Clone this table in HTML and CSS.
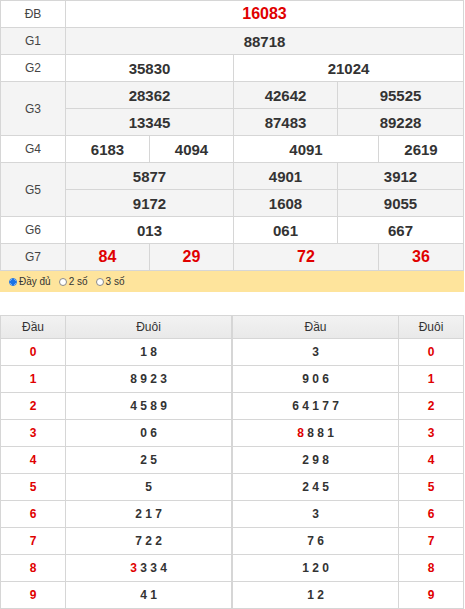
FILE: index.html
```html
<!DOCTYPE html>
<html lang="vi">
<head>
<meta charset="utf-8">
<title>Kết quả xổ số</title>
<link rel="stylesheet" href="styles.css">
</head>
<body>
<div class="kq">
  <div class="row">
    <div class="lbl">ĐB</div>
    <div class="num big red s5">16083</div>
  </div>
  <div class="row alt">
    <div class="lbl">G1</div>
    <div class="num s5">88718</div>
  </div>
  <div class="row">
    <div class="lbl">G2</div>
    <div class="num s2">35830</div>
    <div class="num s3">21024</div>
  </div>
  <div class="row alt">
    <div class="lbl r2">G3</div>
    <div class="num s2">28362</div>
    <div class="num">42642</div>
    <div class="num s2">95525</div>
    <div class="num s2">13345</div>
    <div class="num">87483</div>
    <div class="num s2">89228</div>
  </div>
  <div class="row">
    <div class="lbl">G4</div>
    <div class="num">6183</div>
    <div class="num">4094</div>
    <div class="num s2">4091</div>
    <div class="num">2619</div>
  </div>
  <div class="row alt">
    <div class="lbl r2">G5</div>
    <div class="num s2">5877</div>
    <div class="num">4901</div>
    <div class="num s2">3912</div>
    <div class="num s2">9172</div>
    <div class="num">1608</div>
    <div class="num s2">9055</div>
  </div>
  <div class="row">
    <div class="lbl">G6</div>
    <div class="num s2">013</div>
    <div class="num">061</div>
    <div class="num s2">667</div>
  </div>
  <div class="row alt">
    <div class="lbl">G7</div>
    <div class="num big red">84</div>
    <div class="num big red">29</div>
    <div class="num big red s2">72</div>
    <div class="num big red">36</div>
  </div>
</div>

<div class="opts">
  <label class="opt"><span class="radio on"></span>Đầy đủ</label>
  <label class="opt"><span class="radio"></span>2 số</label>
  <label class="opt"><span class="radio"></span>3 số</label>
</div>

<div class="loto">
  <div class="lt left">
    <div class="th">Đầu</div><div class="th">Đuôi</div>
    <div class="k">0</div><div class="v">1 8</div>
    <div class="k">1</div><div class="v">8 9 2 3</div>
    <div class="k">2</div><div class="v">4 5 8 9</div>
    <div class="k">3</div><div class="v">0 6</div>
    <div class="k">4</div><div class="v">2 5</div>
    <div class="k">5</div><div class="v">5</div>
    <div class="k">6</div><div class="v">2 1 7</div>
    <div class="k">7</div><div class="v">7 2 2</div>
    <div class="k">8</div><div class="v"><span class="hl">3</span> 3 3 4</div>
    <div class="k">9</div><div class="v">4 1</div>
  </div>
  <div class="lt right">
    <div class="th">Đầu</div><div class="th">Đuôi</div>
    <div class="v">3</div><div class="k">0</div>
    <div class="v">9 0 6</div><div class="k">1</div>
    <div class="v">6 4 1 7 7</div><div class="k">2</div>
    <div class="v"><span class="hl">8</span> 8 8 1</div><div class="k">3</div>
    <div class="v">2 9 8</div><div class="k">4</div>
    <div class="v">2 4 5</div><div class="k">5</div>
    <div class="v">3</div><div class="k">6</div>
    <div class="v">7 6</div><div class="k">7</div>
    <div class="v">1 2 0</div><div class="k">8</div>
    <div class="v">1 2</div><div class="k">9</div>
  </div>
</div>
</body>
</html>
```
FILE: styles.css
```css
html, body {
  margin: 0;
  padding: 0;
  background: #fff;
  overflow: hidden;
}
body {
  font-family: "Liberation Sans", Arial, sans-serif;
  color: #333;
}

.kq {
  display: grid;
  grid-template-columns: 64px 83px 83px 103px 40px 84px;
  grid-auto-rows: 26px;
  gap: 1px;
  width: max-content;
  background: #d6d6d6;
  border: 1px solid #d6d6d6;
}
.row { display: contents; }
.row > div {
  background: #fff;
  display: flex;
  align-items: center;
  justify-content: center;
}
.row.alt > div { background: #f4f4f4; }

.lbl {
  font-size: 12px;
  color: #444;
}
.r2 { grid-row: span 2; }
.s2 { grid-column: span 2; }
.s3 { grid-column: span 3; }
.s5 { grid-column: span 5; }

.num {
  font-size: 15px;
  font-weight: bold;
  color: #333;
}
.num.big { font-size: 16px; }
.red { color: #e00000 !important; }

.opts {
  height: 21px;
  width: 464px;
  background: #fee49c;
  display: flex;
  align-items: center;
  padding-left: 9px;
  box-sizing: border-box;
  gap: 8px;
  font-size: 10px;
  color: #333;
}
.opt {
  display: flex;
  align-items: center;
  gap: 2px;
}
.radio {
  width: 8px;
  height: 8px;
  border-radius: 50%;
  border: 1px solid #8a8a8a;
  background: #fff;
  box-sizing: border-box;
}
.radio.on {
  border-color: #1a73e8;
  background: radial-gradient(circle, #1a73e8 0 2.6px, #fff 3px);
}

.loto {
  margin-top: 23px;
  display: flex;
  width: 464px;
}
.lt {
  display: grid;
  grid-template-rows: 22px;
  grid-auto-rows: 26px;
  gap: 1px;
  background: #d6d6d6;
  border: 1px solid #d6d6d6;
}
.lt.left { grid-template-columns: 64px 165px; }
.lt.right { grid-template-columns: 165px 64px; }
.lt > div {
  background: #fff;
  display: flex;
  align-items: center;
  justify-content: center;
  font-size: 12px;
}
.lt > .th {
  background: linear-gradient(#f2f2f2, #e9e9e9);
  color: #333;
}
.lt > .k {
  color: #e00000;
  font-weight: bold;
}
.lt > .v {
  color: #333;
  font-weight: bold;
  white-space: pre;
}
.hl { color: #e00000; }
```
